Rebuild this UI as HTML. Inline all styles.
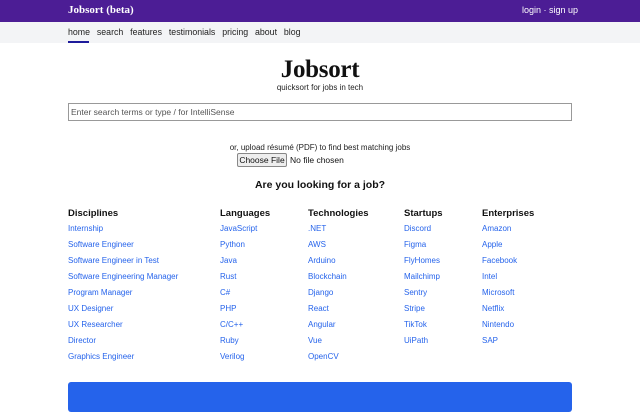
<!DOCTYPE html>
<html><head><style>
*{margin:0;padding:0;box-sizing:border-box}
body{width:640px;height:400px;overflow:hidden;background:#fff;font-family:"Liberation Sans",sans-serif;color:#111;position:relative}
.a{position:absolute;white-space:nowrap}
.hdr{position:absolute;left:0;top:0;width:640px;height:22px;background:#4c1d95}
.nav{position:absolute;left:0;top:22px;width:640px;height:21px;background:#f3f4f6}
.l{color:#2563eb;font-size:8px}
.h{font-weight:bold;font-size:9.5px}
</style></head><body>
<div class="hdr"></div>
<div class="a" style="left:68px;top:4px;color:#fff;font-family:'Liberation Serif',serif;font-weight:bold;font-size:11px">Jobsort (beta)</div>
<div class="a" style="left:522px;top:5px;color:#fff;font-size:9px">login · sign up</div>
<div class="nav"></div>
<div class="a" style="left:68px;top:27px;font-size:8.8px;color:#222;word-spacing:1px">home&nbsp; search&nbsp; features&nbsp; testimonials&nbsp; pricing&nbsp; about&nbsp; blog</div>
<div class="a" style="left:68px;top:41px;width:21px;height:2px;background:#1e1b9b"></div>
<div class="a" style="left:0;width:640px;text-align:center;top:56px;font-family:'Liberation Serif',serif;font-size:25px;font-weight:bold;letter-spacing:-0.3px;color:#111">Jobsort</div>
<div class="a" style="left:0;width:640px;text-align:center;top:83px;font-size:8px;color:#222">quicksort for jobs in tech</div>
<div class="a" style="left:68px;top:103px;width:504px;height:18px;border:1px solid #999;font-size:8.5px;color:#555;padding:3px 2px">Enter search terms or type / for IntelliSense</div>
<div class="a" style="left:0;width:640px;text-align:center;top:143px;font-size:8px;color:#222">or, upload résumé (PDF) to find best matching jobs</div>
<div class="a" style="left:237px;top:153px;width:50px;height:14px;border:1px solid #888;background:#eee;font-size:8.5px;text-align:center;line-height:12px;border-radius:2px">Choose File</div>
<div class="a" style="left:290px;top:155px;font-size:8.5px">No file chosen</div>
<div class="a" style="left:0;width:640px;text-align:center;top:179px;font-size:10.5px;font-weight:bold">Are you looking for a job?</div>

<div class="a" style="left:68px;top:208px">
<div class="h">Disciplines</div>
<div class="l" style="margin-top:2px;line-height:16px">Internship<br>Software Engineer<br>Software Engineer in Test<br>Software Engineering Manager<br>Program Manager<br>UX Designer<br>UX Researcher<br>Director<br>Graphics Engineer</div></div>
<div class="a" style="left:220px;top:208px">
<div class="h">Languages</div>
<div class="l" style="margin-top:2px;line-height:16px">JavaScript<br>Python<br>Java<br>Rust<br>C#<br>PHP<br>C/C++<br>Ruby<br>Verilog</div></div>
<div class="a" style="left:308px;top:208px">
<div class="h">Technologies</div>
<div class="l" style="margin-top:2px;line-height:16px">.NET<br>AWS<br>Arduino<br>Blockchain<br>Django<br>React<br>Angular<br>Vue<br>OpenCV</div></div>
<div class="a" style="left:404px;top:208px">
<div class="h">Startups</div>
<div class="l" style="margin-top:2px;line-height:16px">Discord<br>Figma<br>FlyHomes<br>Mailchimp<br>Sentry<br>Stripe<br>TikTok<br>UiPath</div></div>
<div class="a" style="left:482px;top:208px">
<div class="h">Enterprises</div>
<div class="l" style="margin-top:2px;line-height:16px">Amazon<br>Apple<br>Facebook<br>Intel<br>Microsoft<br>Netflix<br>Nintendo<br>SAP</div></div>
<div class="a" style="left:68px;top:382px;width:504px;height:30px;background:#2563eb;border-radius:3px"></div>
</body></html>
